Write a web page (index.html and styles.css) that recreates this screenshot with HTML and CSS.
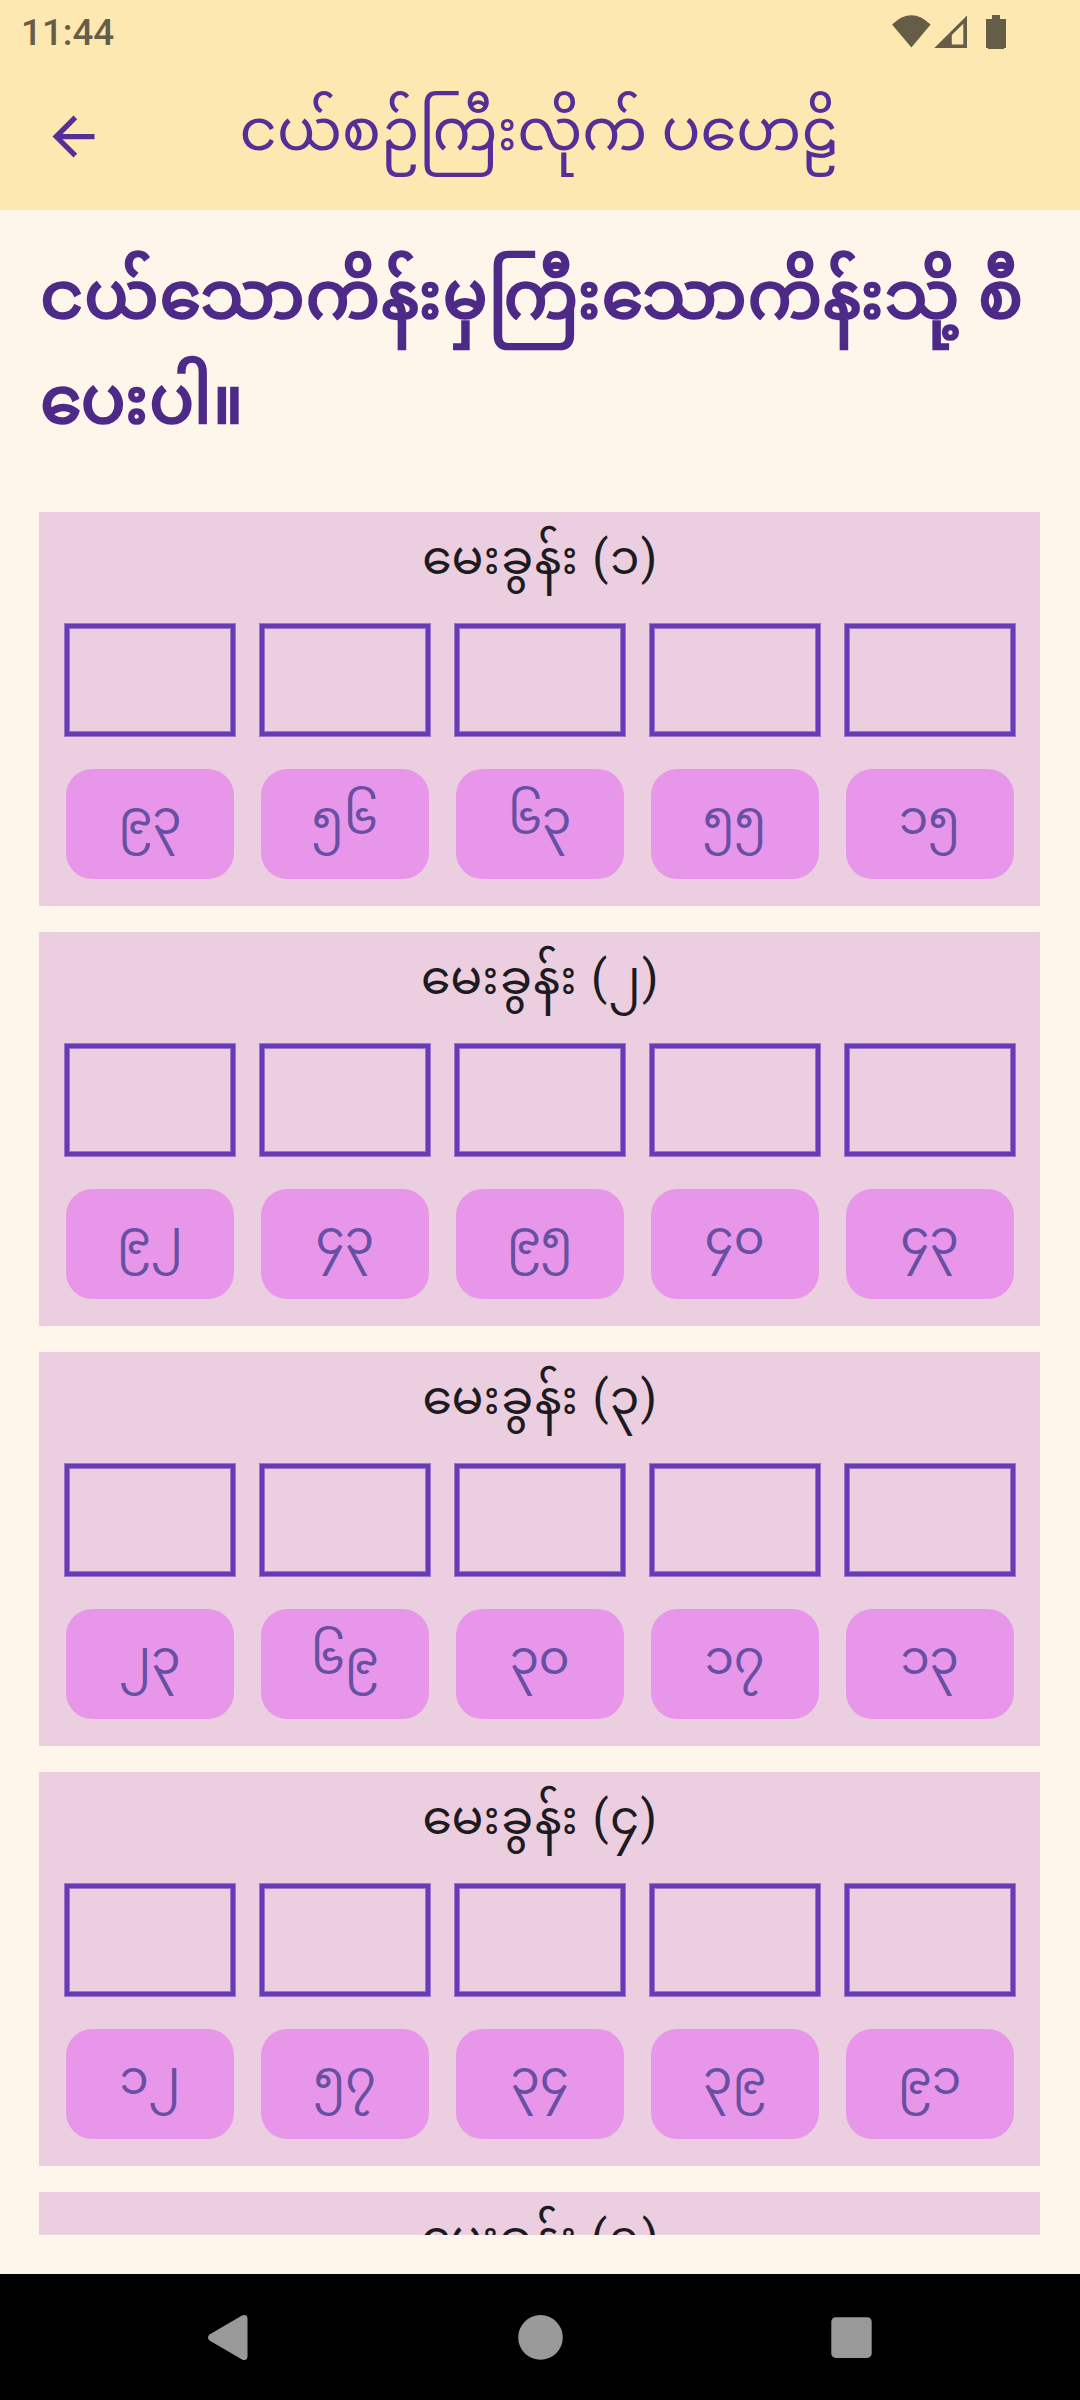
FILE: index.html
```
<!DOCTYPE html>
<html lang="my">
<head>
<meta charset="utf-8">
<title>ငယ်စဉ်ကြီးလိုက် ပဟေဠိ</title>
<link rel="stylesheet" href="styles.css">
</head>
<body>
<header class="top">
  <div class="status">
    <span class="time">11:44</span>
    <svg class="status-icons" width="116" height="36" viewBox="891 13 116 36">
      <path d="M892 23.5Q911.5 5 930.6 23.5L911.4 46.6Z"/>
      <path fill-rule="evenodd" d="M934.3 47L967 14.5V47ZM951.8 43.5H963.3V22.7L951.8 34Z"/>
      <path d="M992 14h8v4h6v29h-2v1h-16v-1h-2V18h6z"/>
    </svg>
  </div>
  <div class="appbar">
    <svg class="back" width="63" height="63" viewBox="0 0 24 24"><path d="M20 11H7.83l5.59-5.59L12 4l-8 8 8 8 1.41-1.41L7.83 13H20v-2z"/></svg>
    <h1 class="title">ငယ်စဉ်ကြီးလိုက် ပဟေဠိ</h1>
  </div>
</header>
<main class="content">
  <h2 class="instruction">ငယ်သောကိန်းမှကြီးသောကိန်းသို့ စီ<br>ပေးပါ။</h2>
  <div class="list">
    <section class="card">
      <h3 class="question">မေးခွန်း (၁)</h3>
      <div class="row slots"><i class="slot"></i><i class="slot"></i><i class="slot"></i><i class="slot"></i><i class="slot"></i></div>
      <div class="row"><span class="chip">၉၃</span><span class="chip">၅၆</span><span class="chip">၆၃</span><span class="chip">၅၅</span><span class="chip">၁၅</span></div>
    </section>
    <section class="card">
      <h3 class="question">မေးခွန်း (၂)</h3>
      <div class="row slots"><i class="slot"></i><i class="slot"></i><i class="slot"></i><i class="slot"></i><i class="slot"></i></div>
      <div class="row"><span class="chip">၉၂</span><span class="chip">၄၃</span><span class="chip">၉၅</span><span class="chip">၄၀</span><span class="chip">၄၃</span></div>
    </section>
    <section class="card">
      <h3 class="question">မေးခွန်း (၃)</h3>
      <div class="row slots"><i class="slot"></i><i class="slot"></i><i class="slot"></i><i class="slot"></i><i class="slot"></i></div>
      <div class="row"><span class="chip">၂၃</span><span class="chip">၆၉</span><span class="chip">၃၀</span><span class="chip">၁၇</span><span class="chip">၁၃</span></div>
    </section>
    <section class="card">
      <h3 class="question">မေးခွန်း (၄)</h3>
      <div class="row slots"><i class="slot"></i><i class="slot"></i><i class="slot"></i><i class="slot"></i><i class="slot"></i></div>
      <div class="row"><span class="chip">၁၂</span><span class="chip">၅၇</span><span class="chip">၃၄</span><span class="chip">၃၉</span><span class="chip">၉၁</span></div>
    </section>
    <section class="card">
      <h3 class="question">မေးခွန်း (၅)</h3>
    </section>
  </div>
</main>
<nav class="navbar">
  <svg width="1080" height="126" viewBox="0 0 1080 126">
    <path d="M209.500 60.500L242 41.500Q247.500 39.500 247.500 45V82Q247.500 87.500 242 85.500L209.500 66.500Q206.500 63.500 209.500 60.500Z"/>
    <circle cx="540.500" cy="63.400" r="22.300"/>
    <rect x="831.300" y="43.300" width="40.400" height="40.600" rx="4.500"/>
  </svg>
</nav>
</body>
</html>
```
FILE: styles.css
```
* { box-sizing: border-box; margin: 0; padding: 0; }

body {
  display: flex;
  flex-direction: column;
  width: 1080px;
  height: 2400px;
  overflow: hidden;
  background: #fff6eb;
  font-family: Roboto, "Noto Sans Myanmar", sans-serif;
}

.top {
  height: 210px;
  flex: none;
  background: #fee8b2;
}

.status {
  height: 63px;
  padding: 0 73px 0 21px;
  display: flex;
  justify-content: space-between;
  align-items: center;
}

.time {
  font: 500 36.75px/66px Roboto, sans-serif;
  color: #665d47;
  padding-top: 2px;
}

.status-icons { fill: #665d47; }

.appbar {
  height: 147px;
  padding-left: 42px;
  display: flex;
  align-items: center;
}

.back { fill: #552f97; flex: none; }

.title {
  margin: 0 0 13px 134.5px;
  font-size: 57.75px;
  font-weight: 400;
  line-height: 100px;
  color: #552f97;
  white-space: nowrap;
}

.content {
  flex: none;
  height: 2064px;
  padding: 33.375px 40px 0 39.375px;
  overflow: hidden;
}

.instruction {
  height: 268.5px;
  padding-left: 1px;
  font-size: 65.625px;
  font-weight: 400;
  line-height: 105px;
  letter-spacing: 1.6px;
  color: #4e2a88;
  -webkit-text-stroke: 2.7px #4e2a88;
  white-space: nowrap;
}

.list {
  height: 1723.125px;
  overflow: hidden;
  display: flex;
  flex-direction: column;
  gap: 26.25px;
}

.card {
  height: 393.75px;
  flex: none;
  padding: 0 13px;
  background: #ebcee0;
}

.question {
  height: 112px;
  padding-left: 1.5px;
  font-size: 47.25px;
  font-weight: 400;
  line-height: 93.5px;
  letter-spacing: 1.4px;
  text-align: center;
  color: #1d1b20;
}

.row {
  display: flex;
  justify-content: space-around;
}

.slots { margin-bottom: 33.1px; }

.slot {
  width: 170px;
  height: 112px;
  border: 4px solid #673ab7;
  box-shadow: 0 0 0 1px rgba(103, 58, 183, .6), inset 0 0 0 1px rgba(103, 58, 183, .6);
}

.chip {
  width: 168px;
  height: 110.25px;
  border-radius: 26.25px;
  background: #e896e9;
  color: #6750a4;
  font-size: 47.25px;
  line-height: 98.5px;
  text-align: center;
}

.navbar {
  height: 126px;
  flex: none;
  background: #000;
}

.navbar svg { display: block; fill: #999; }
```
